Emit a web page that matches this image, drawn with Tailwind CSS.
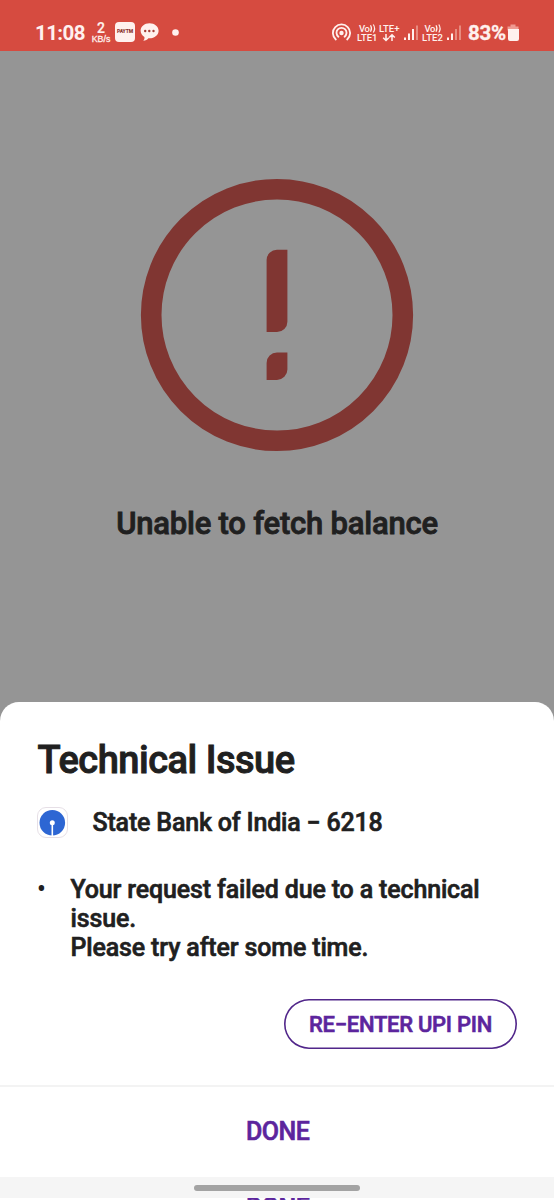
<!DOCTYPE html>
<html lang="en">
<head>
<meta charset="utf-8">
<title>Technical Issue</title>
<script src="https://cdn.jsdelivr.net/npm/@tailwindcss/browser@4"></script>
</head>
<body class="w-[554px] h-[1200px] overflow-hidden bg-[#959595] font-['Roboto',sans-serif] text-[#202020] whitespace-nowrap">
<div class="flex flex-col w-[554px] h-[1200px] overflow-hidden">
  <header class="h-[51px] shrink-0 bg-[#d64b40] text-[#fff1ee] flex items-start pt-[22px] pl-[35px]">
    <span class="w-[56px] text-[20.5px] leading-[22px] font-bold tracking-[-0.6px]">11:08</span>
    <span class="w-[20px] flex flex-col items-center text-center">
      <span class="text-[14px] leading-[12px] font-medium [-webkit-text-stroke:0.2px_#fff1ee]">2</span>
      <span class="text-[8.8px] leading-[10px] font-medium [-webkit-text-stroke:0.3px_#fff1ee] font-['Liberation_Sans',sans-serif]">KB/s</span>
    </span>
    <span class="ml-[4px] w-[20px] h-[20px] rounded-[4px] bg-[#fff1ee] flex items-center justify-center text-[#8c342e] text-[5px] font-black tracking-[-0.1px]"><span class="scale-y-125">PAYTM</span></span>
    <svg class="ml-[5px] w-[19px] h-[20px]" viewBox="0 0 19 20" fill="#fff1ee"><path d="M9.500 1.300C4.400 1.300.6 4.600.6 8.800c0 2.600 1.500 4.800 3.800 6.200.3 1.500-.1 2.700-1.200 3.700 2.400-.1 4.200-1 5.200-2.400C14.300 16.700 18.600 13.300 18.600 8.800c0-4.200-4-7.500-9.100-7.500z"/><g fill="#a53e37"><circle cx="5.200" cy="9" r="1.200"/><circle cx="9.300" cy="9" r="1.200"/><circle cx="13.500" cy="9" r="1.200"/></g></svg>
    <svg class="ml-[11px] w-[10px] h-[20px]" viewBox="0 0 10 20"><circle cx="5.500" cy="10.500" r="3.300" fill="#fff1ee"/></svg>
    <svg class="ml-[151px] w-[20px] h-[20px]" viewBox="-.5 .5 20 20" fill="none" stroke="#fff1ee" stroke-width="1.800" stroke-linecap="round"><circle cx="10" cy="11.500" r="2.200" fill="#fff1ee" stroke="none"/><path d="M6.900 15.200a5 5 0 1 1 6.200 0M4.300 18a8.600 8.600 0 1 1 11.400 0"/></svg>
    <svg class="ml-[6px] w-[106px] h-[22px]" viewBox="357 22 106 22" fill="#fff1ee" font-family="Roboto" font-size="9.500" font-weight="500">
      <text x="359" y="32" textLength="10.800">Vo</text><path d="M370.500 25.300q2 3.200 0 6.400M373.300 24.500q2.600 4 0 8" fill="none" stroke="#fff1ee" stroke-width="1.200"/>
      <text x="357" y="41" textLength="20.500">LTE1</text>
      <text x="379" y="31.500" textLength="20.500">LTE+</text>
      <path d="M386 34v6M383.200 37.700l2.800 2.800 2.800-2.800M392 41v-6M389.200 37.500l2.800-2.800 2.800 2.800" fill="none" stroke="#fff1ee" stroke-width="1.500"/>
      <path d="M404 37.500h2V40h-2zM408 33.500h2V40h-2zM412 29h2V40h-2z"/><path d="M416 25.500h2V40h-2z" fill="#e78b80"/>
      <text x="424.500" y="32" textLength="10.800">Vo</text><path d="M436 25.300q2 3.200 0 6.400M438.800 24.500q2.600 4 0 8" fill="none" stroke="#fff1ee" stroke-width="1.200"/>
      <text x="422" y="41" textLength="21">LTE2</text>
      <path d="M447 37.500h2V40h-2zM451 33.500h2V40h-2z"/><path d="M455 29h2V40h-2zM459 25.500h2V40h-2z" fill="#e78b80"/>
    </svg>
    <span class="ml-[5px] w-[39px] text-[20.500px] leading-[22px] font-bold tracking-[-0.3px] [-webkit-text-stroke:0.3px_#fff1ee]">83%</span>
    <svg class="w-[12px] h-[20px]" viewBox="508 22 12 20"><path d="M511.500 24.500h5v2h3v4h-11v-4h3z" fill="#ef9a91"/><path d="M509 29h11v10a2 2 0 0 1-2 2h-7a2 2 0 0 1-2-2z" fill="#fff1ee"/></svg>
  </header>

  <main class="h-[651px] shrink-0 flex flex-col items-center pt-[127px]">
    <svg class="w-[274px] h-[274px]" viewBox="140 178 274 274" fill="#803632"><circle cx="277" cy="315" r="125.800" fill="none" stroke="#803632" stroke-width="20.600"/><path d="M277 249.700h10.400v72a10.400 10.400 0 0 1-10.400 10.400h-10.400v-72a10.400 10.400 0 0 1 10.400-10.400zM277 352.500h10.400v17a10.400 10.400 0 0 1-10.400 10.400h-10.400v-17a10.400 10.400 0 0 1 10.400-10.400z"/></svg>
    <h1 class="mt-[52px] text-[31px] leading-[40px] font-medium tracking-[-0.21px] [-webkit-text-stroke:0.8px_#202020]">Unable to fetch balance</h1>
  </main>

  <section class="h-[498px] shrink-0 bg-white rounded-t-[19px] flex flex-col">
    <div class="h-[383px] shrink-0 px-[37px] pt-[36px] flex flex-col">
      <h2 class="pl-[0.5px] text-[38px] leading-[44px] font-medium tracking-[-0.48px] [-webkit-text-stroke:0.9px_#202020]">Technical Issue</h2>
      <div class="mt-[25px] flex items-center h-[31px]">
        <svg class="w-[31px] h-[31px]" viewBox="0 0 31 31"><rect x=".5" y=".5" width="30" height="30" rx="8.500" fill="#fff" stroke="#e6dfe6"/><circle cx="15.300" cy="15.700" r="12.800" fill="#2d66d3"/><circle cx="15.300" cy="15.700" r="2.500" fill="#fff"/><path d="M14.500 16h1.600v13h-1.600z" fill="#fff"/></svg>
        <span class="ml-[24.500px] text-[25px] font-medium tracking-[-0.18px] [-webkit-text-stroke:0.6px_#202020]">State Bank of India − 6218</span>
      </div>
      <div class="mt-[37px] flex text-[25px] leading-[29px] font-medium [-webkit-text-stroke:0.6px_#202020]">
        <span class="w-[33.500px] [-webkit-text-stroke:0px]">•</span>
        <p class="tracking-[-0.15px]">Your request failed due to a technical<br>issue.<br>Please try after some time.</p>
      </div>
      <button class="mt-[37px] self-end w-[233px] h-[50px] rounded-full inset-ring-[1.6px] inset-ring-[#51268a] text-[#5c259d] text-[22px] leading-[30px] pt-[2px] font-medium tracking-[-0.28px] [-webkit-text-stroke:0.6px_#5c259d]">RE−ENTER UPI PIN</button>
    </div>
    <div class="h-[92px] shrink-0 border-t-2 border-[#f3f3f3] flex items-center justify-center text-[#5c259d] text-[25px] font-medium tracking-[-0.5px] [-webkit-text-stroke:0.6px_#5c259d]"><span class="pl-[1.500px]">DONE</span></div>
    <div class="h-[21px] shrink-0 bg-[#f5f5f5] flex justify-center pt-[8px]"><div class="w-[166px] h-[6px] rounded-full bg-[#a3a3a3]"></div></div>
    <div class="h-[2px] overflow-hidden text-center text-[#5c259d] text-[25px] leading-[19px] font-medium tracking-[-0.5px] [-webkit-text-stroke:0.6px_#5c259d]"><span class="pl-[1.500px]">DONE</span></div>
  </section>
</div>
</body>
</html>
